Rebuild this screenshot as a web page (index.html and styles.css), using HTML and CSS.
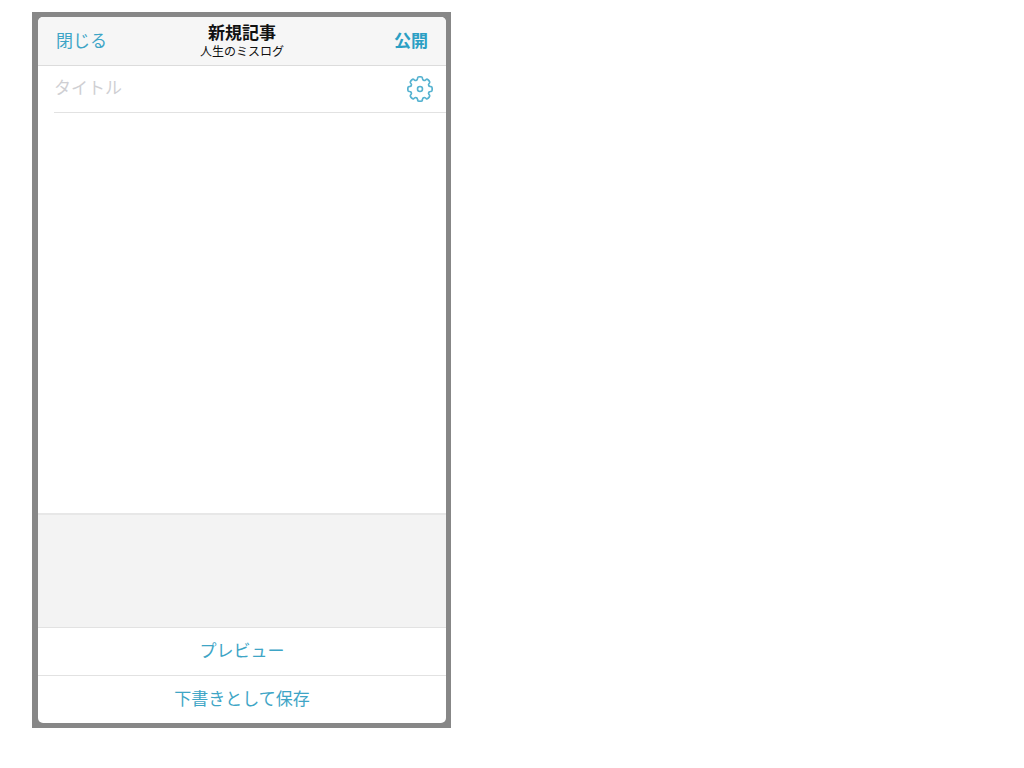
FILE: index.html
```html
<!DOCTYPE html>
<html lang="ja">
<head>
<meta charset="utf-8">
<meta name="viewport" content="width=device-width, initial-scale=1">
<title>新規記事</title>
<link rel="stylesheet" href="styles.css">
</head>
<body>
<main class="frame">
  <form class="editor">
    <header class="bar">
      <button type="button" class="action close">閉じる</button>
      <div class="heading">
        <h1 class="title">新規記事</h1>
        <p class="blog">人生のミスログ</p>
      </div>
      <button type="button" class="action publish">公開</button>
    </header>
    <div class="title-row">
      <input type="text" class="title-input" placeholder="タイトル" aria-label="タイトル">
      <button type="button" class="settings" aria-label="設定">
        <svg class="gear" viewBox="-14 -14 28 28" aria-hidden="true">
          <defs>
            <path id="half" d="M0-12.2H1Q2.2-12.2 2.4-11L2.5-10.2Q2.6-9 3.6-8.7"/>
            <g id="tooth"><use href="#half"/><use href="#half" transform="scale(-1 1)"/></g>
          </defs>
          <use href="#tooth"/>
          <use href="#tooth" transform="rotate(45)"/>
          <use href="#tooth" transform="rotate(90)"/>
          <use href="#tooth" transform="rotate(135)"/>
          <use href="#tooth" transform="rotate(180)"/>
          <use href="#tooth" transform="rotate(225)"/>
          <use href="#tooth" transform="rotate(270)"/>
          <use href="#tooth" transform="rotate(315)"/>
          <circle r="2.5"/>
        </svg>
      </button>
    </div>
    <textarea class="body-input" aria-label="本文"></textarea>
    <div class="tray"></div>
    <button type="button" class="action wide">プレビュー</button>
    <button type="button" class="action wide">下書きとして保存</button>
  </form>
</main>
</body>
</html>
```
FILE: styles.css
```css
* {
  box-sizing: border-box;
}

body {
  margin: 0;
  padding: 12px 32px 40px;
  background: #fff;
  color: #111;
  font-family: "Liberation Sans", "Noto Sans CJK JP", sans-serif;
}

button,
input,
textarea {
  margin: 0;
  border: 0;
  padding: 0;
  background: none;
  font: inherit;
}

.frame {
  max-width: 419px;
  padding: 5px 5px 5px 6px;
  background: #878787;
}

.editor {
  display: flex;
  flex-direction: column;
  min-height: calc(100vh - 62px);
  border-radius: 5px;
  background: #fff;
  overflow: hidden;
}

.bar {
  display: grid;
  grid-template-columns: 1fr auto 1fr;
  align-items: center;
  height: 49px;
  padding: 2px 18px 0;
  border-bottom: 1px solid #dcdcdc;
  background: #f6f6f6;
}

.action {
  color: #3ea5c6;
  font-size: 17px;
  line-height: 24px;
}

.close {
  justify-self: start;
}

.publish {
  justify-self: end;
  color: #2b9fc4;
  font-weight: bold;
}

.heading {
  text-align: center;
}

.title,
.blog {
  margin: 0;
}

.title {
  font-size: 17px;
  line-height: 20px;
}

.blog {
  font-size: 12px;
  line-height: 16px;
}

.title-row {
  display: flex;
  align-items: center;
  height: 47px;
  margin-left: 16px;
  padding-right: 12px;
  border-bottom: 1px solid #e2e2e2;
}

.title-input {
  flex: 1;
  min-width: 0;
  height: 40px;
  font-size: 17px;
  outline: none;
}

.title-input::placeholder {
  color: #cfcfd3;
  opacity: 1;
}

.settings {
  display: flex;
}

.gear {
  width: 28px;
  height: 28px;
  fill: none;
  stroke: #55b2d0;
  stroke-width: 1.6;
  stroke-linecap: round;
}

.body-input {
  flex: 1;
  min-height: 120px;
  padding: 12px 16px;
  font-size: 17px;
  resize: none;
  outline: none;
}

.tray {
  height: 114px;
  border-top: 2px solid #e7e7e7;
  background: #f3f3f3;
}

.wide {
  height: 48px;
  border-top: 1px solid #e2e2e2;
}
```
